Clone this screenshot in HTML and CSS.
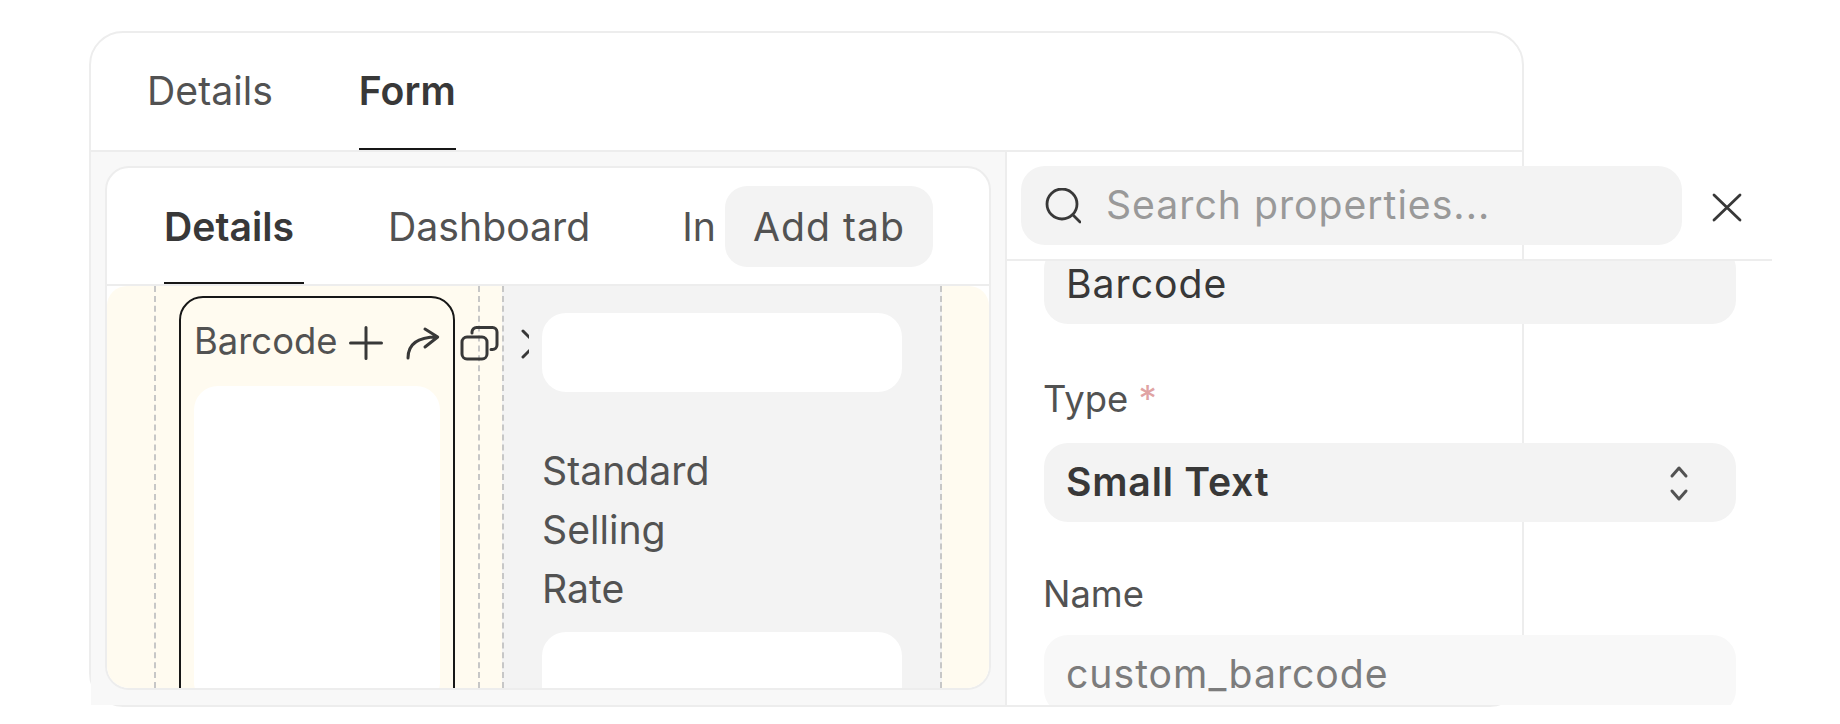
FILE: index.html
```html
<!DOCTYPE html>
<html lang="en">
<head>
    <meta charset="UTF-8">
    <meta name="viewport" content="width=device-width, initial-scale=1.0">
    <title>Form Builder</title>
    <link rel="stylesheet" href="styles.css">
</head>
<body>
    <div class="card">

        <!-- Page tabs -->
        <div class="top-tabs">
            <div class="tab">Details</div>
            <div class="tab tab-active">Form</div>
        </div>

        <div class="main">

            <!-- Builder -->
            <div class="builder">
                <div class="form-card">
                    <div class="form-tabs">
                        <div class="form-tab form-tab-active">Details</div>
                        <div class="form-tab">Dashboard</div>
                        <div class="form-tab">In</div>
                        <button class="add-tab">Add tab</button>
                    </div>

                    <div class="canvas">
                        <div class="column">
                            <div class="field-box">
                                <div class="field-head">
                                    <span class="field-title">Barcode</span>
                                    <svg class="icon" viewBox="0 0 40 40"><path d="M4.5 20h31M20 4.5v31"/></svg>
                                    <svg class="icon" viewBox="0 0 40 40"><path d="M5 35C5 22 14 14 34 14M22 6l12.7 8L22 24"/></svg>
                                    <svg class="icon" viewBox="0 0 40 40"><rect x="2" y="14" width="25" height="22" rx="5"/><path d="M12 10V9a4.5 4.5 0 0 1 4.5-4.5h16a4.5 4.5 0 0 1 4.5 4.5v13a4.5 4.5 0 0 1-4.5 4.5H31"/></svg>
                                    <span class="icon-cut">
                                        <svg class="icon" viewBox="0 0 40 40"><path d="M9 8l26 26M35 8L9 34"/></svg>
                                    </span>
                                </div>
                                <div class="field-blank"></div>
                            </div>
                        </div>

                        <div class="column column-active">
                            <div class="blank-input"></div>
                            <div class="column-label">Standard<br>Selling<br>Rate</div>
                            <div class="blank-input"></div>
                        </div>
                    </div>
                </div>
            </div>

            <!-- Properties -->
            <div class="props">
                <div class="props-head">
                    <div class="search">
                        <svg class="search-icon" viewBox="0 0 36 36"><circle cx="17" cy="16" r="15"/><path d="M28 27l7 7"/></svg>
                        <span>Search properties...</span>
                    </div>
                    <svg class="close-icon" viewBox="0 0 30 30"><path d="M2 3l26 25M28 3L2 28"/></svg>
                </div>

                <div class="props-body">
                    <div class="input input-first">Barcode</div>

                    <div class="label label-required">Type <span class="star">*</span></div>
                    <div class="input input-select">
                        <span>Small Text</span>
                        <svg class="updown" viewBox="0 0 20 38"><path d="M3 12l7-8 7 8M3 27l7 8 7-8"/></svg>
                    </div>

                    <div class="label">Name</div>
                    <div class="input input-disabled">custom_barcode</div>
                </div>
            </div>

        </div>
    </div>
</body>
</html>
```

FILE: styles.css
```css
/* General Styles */
html, body {
    height: 724px;
    overflow: hidden;
}

body {
    font-family: Inter, "Liberation Sans", sans-serif;
    font-size: 39.2px;
    margin: 0;
    padding: 31px 0 0 89px;
    box-sizing: border-box;
    background-color: #fff;
    color: #525252;
}

.card {
    width: 1435px;
    height: 676px;
    box-sizing: border-box;
    border: 2px solid #ededed;
    border-radius: 34px;
}

/* Page tabs */
.top-tabs {
    display: flex;
    gap: 86px;
    height: 119px;
    box-sizing: border-box;
    padding-left: 56px;
    border-bottom: 2px solid #ededed;
}

.tab {
    display: flex;
    align-items: center;
    border-bottom: 2px solid transparent;
}

.tab-active {
    font-weight: 600;
    color: #383838;
    border-bottom-color: #171717;
}

.main {
    display: flex;
    height: 553px;
}

/* Builder */
.builder {
    flex: none;
    width: 916px;
    box-sizing: border-box;
    padding: 14px;
    background-color: #f8f8f8;
    border-right: 2px solid #ededed;
}

.form-card {
    width: 886px;
    height: 524px;
    box-sizing: border-box;
    border: 2px solid #ededed;
    border-radius: 24px;
    background-color: #fff;
    overflow: hidden;
}

.form-tabs {
    position: relative;
    display: flex;
    gap: 82px;
    height: 118px;
    box-sizing: border-box;
    padding-left: 57px;
    border-bottom: 2px solid #ededed;
    overflow: hidden;
}

.form-tab {
    display: flex;
    align-items: center;
    flex: none;
    padding: 2px 10px 0 0;
    border-bottom: 2px solid transparent;
}

.form-tab-active {
    margin-right: 2px;
    font-weight: 600;
    color: #383838;
    border-bottom-color: #171717;
}

.add-tab {
    position: absolute;
    top: 18px;
    right: 56px;
    width: 208px;
    height: 81px;
    border: none;
    border-radius: 22px;
    background-color: #f3f3f3;
    color: #525252;
    font: inherit;
    letter-spacing: 0.025em;
}

/* Canvas */
.canvas {
    display: flex;
    height: 402px;
    padding-left: 47px;
    background-color: #fffbf0;
    border-radius: 20px;
    overflow: hidden;
}

.column {
    flex: none;
    position: relative;
    z-index: 1;
    width: 326px;
    box-sizing: border-box;
    margin-right: 22px;
    padding: 10px 0 0 23px;
    border-left: 2px dashed #c7c7c7;
    border-right: 2px dashed #c7c7c7;
}

.column-active {
    z-index: 0;
    width: 440px;
    margin-right: 0;
    padding: 27px 0 0 38px;
    background-color: #f3f3f3;
}

.field-box {
    width: 276px;
    height: 420px;
    box-sizing: border-box;
    padding: 0 13px;
    border: 2px solid #171717;
    border-radius: 24px;
}

.field-head {
    display: flex;
    align-items: center;
    gap: 17px;
    height: 88px;
    padding-top: 2px;
    box-sizing: border-box;
}

.field-title {
    flex: none;
    margin: 0 -8px 4px 0;
    font-size: 36.4px;
}

.icon {
    flex: none;
    width: 40px;
    height: 40px;
    fill: none;
    stroke: #383838;
    stroke-width: 3;
    stroke-linecap: round;
    stroke-linejoin: round;
}

.icon-cut {
    flex: none;
    width: 15px;
    height: 40px;
    margin-left: -3px;
    overflow: hidden;
}

.field-blank {
    width: 246px;
    height: 320px;
    border-radius: 24px;
    background-color: #fff;
}

.blank-input {
    width: 360px;
    height: 79px;
    border-radius: 24px;
    background-color: #fff;
}

.column-label {
    margin: 49px 0 14px;
    line-height: 59px;
}

/* Properties */
.props {
    flex: none;
    width: 765px;
    height: 553px;
    display: flex;
    flex-direction: column;
    overflow: hidden;
}

.props-head {
    flex: none;
    display: flex;
    align-items: flex-start;
    height: 109px;
    box-sizing: border-box;
    padding: 14px 0 0 14px;
    border-bottom: 2px solid #ededed;
}

.search {
    display: flex;
    align-items: center;
    width: 661px;
    height: 79px;
    box-sizing: border-box;
    padding: 0 0 0 24px;
    border-radius: 24px;
    background-color: #f3f3f3;
    color: #999;
    letter-spacing: 0.025em;
}

.search span {
    margin-bottom: 2px;
}

.search-icon {
    flex: none;
    width: 36px;
    height: 36px;
    margin-right: 25px;
    fill: none;
    stroke: #383838;
    stroke-width: 2.8;
    stroke-linecap: round;
}

.close-icon {
    flex: none;
    width: 30px;
    height: 30px;
    margin: 26px 0 0 30px;
    fill: none;
    stroke: #383838;
    stroke-width: 2.8;
    stroke-linecap: round;
}

.props-body {
    flex: 1;
    padding-left: 37px;
    overflow: hidden;
}

.input {
    display: flex;
    align-items: center;
    justify-content: space-between;
    width: 692px;
    height: 79px;
    box-sizing: border-box;
    padding: 0 47px 2px 22px;
    border-radius: 24px;
    background-color: #f3f3f3;
    color: #383838;
    letter-spacing: 0.025em;
}

.input-first {
    margin-top: -16px;
}

.input-select {
    font-weight: 600;
    letter-spacing: 0.02em;
}

.input-disabled {
    background-color: #f8f8f8;
    color: #7c7c7c;
}

.label {
    margin: 50px 0 19px -1px;
    font-size: 36.4px;
    line-height: 44px;
}

.label-required {
    padding: 3px 0;
}

.star {
    color: #e0a3a3;
}

.updown {
    width: 20px;
    height: 38px;
    margin-top: 2px;
    fill: none;
    stroke: #525252;
    stroke-width: 3;
    stroke-linecap: round;
    stroke-linejoin: round;
}
```
